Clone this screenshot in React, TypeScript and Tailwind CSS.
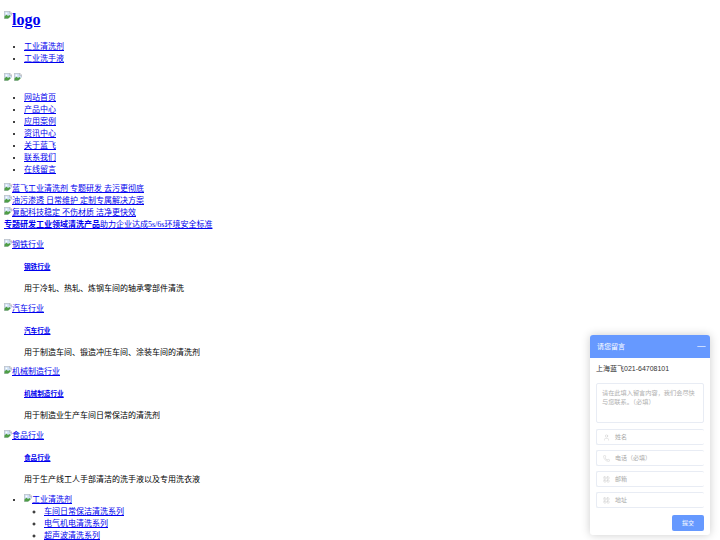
import { Minus, Phone, User, LayoutGrid } from "lucide-react";

const BrokenImage = () => (
  <svg width="8" height="8" viewBox="0 0 16 16" className="inline-block align-top">
    <path d="M0.5 0.5h11l4 4v11H0.5z" fill="#cfe0f5" stroke="#9a9a9a" />
    <path d="M11.5 0.5v4h4" fill="#eee" stroke="#9a9a9a" />
    <path d="M1 15V11l4-4 3 3 3-2 4 4v3z" fill="#4f9e46" />
    <circle cx="5" cy="5" r="1.8" fill="#fff" />
    <path d="M8 16l8-8v8z" fill="#fff" />
  </svg>
);

const Img = ({ alt }: { alt?: string }) => (
  <>
    <BrokenImage />
    {alt}
  </>
);

const industries = [
  { name: "钢铁行业", desc: "用于冷轧、热轧、炼钢车间的轴承零部件清洗" },
  { name: "汽车行业", desc: "用于制造车间、锻造冲压车间、涂装车间的清洗剂" },
  { name: "机械制造行业", desc: "用于制造业生产车间日常保洁的清洗剂" },
  { name: "食品行业", desc: "用于生产线工人手部清洁的洗手液以及专用洗衣液" },
];

const navItems = ["网站首页", "产品中心", "应用案例", "资讯中心", "关于蓝飞", "联系我们", "在线留言"];

const banners = ["蓝飞工业清洗剂 专题研发 去污更彻底", "油污渗透 日常维护 定制专属解决方案", "复配科技稳定 不伤材质 洁净更快效"];

const fields = [
  { label: "姓名", icon: <User size={7} strokeWidth={1} /> },
  { label: "电话（必填）", icon: <Phone size={7} strokeWidth={1} /> },
  { label: "邮箱", icon: <LayoutGrid size={7} strokeWidth={1} /> },
  { label: "地址", icon: <LayoutGrid size={7} strokeWidth={1} /> },
];

export default function App() {
  return (
    <div className="relative h-[540px] overflow-hidden bg-white px-1 text-[8px] leading-[12px] text-black font-['Liberation_Serif','Noto_Sans_CJK_SC',serif] [&_a]:text-[#0000ee] [&_a]:underline">
      <h1 className="pt-[11px] pb-[12px] text-base leading-[18px] font-bold">
        <a href="#">
          <Img alt="logo" />
        </a>
      </h1>

      <ul className="list-disc pl-5">
        <li><a href="#">工业清洗剂</a></li>
        <li><a href="#">工业洗手液</a></li>
      </ul>

      <div className="mt-2 flex h-[11px] items-start gap-[2px]">
        <BrokenImage />
        <BrokenImage />
      </div>

      <ul className="mt-2 list-disc pl-5">
        {navItems.map((item) => (
          <li key={item}><a href="#">{item}</a></li>
        ))}
      </ul>

      <div className="mt-[7px]">
        {banners.map((b) => (
          <div key={b}>
            <a href="#"><Img alt={b} /></a>
          </div>
        ))}
        <a href="#">
          <b>专题研发工业领域清洗产品</b>助力企业达成5s/6s环境安全标准
        </a>
      </div>

      <div className="mt-2">
        {industries.map((it) => (
          <div key={it.name} className="mb-[7.67px]">
            <a href="#"><Img alt={it.name} /></a>
            <div className="mt-[11px] pl-5">
              <h5 className="text-[6.64px] leading-[10px] font-bold">
                <a href="#">{it.name}</a>
              </h5>
              <p className="mt-[11px]">{it.desc}</p>
            </div>
          </div>
        ))}
      </div>

      <ul className="list-disc pl-5">
        <li>
          <a href="#"><Img alt="工业清洗剂" /></a>
          <ul className="list-[circle] pl-5">
            <li><a href="#">车间日常保洁清洗系列</a></li>
            <li><a href="#">电气机电清洗系列</a></li>
            <li><a href="#">超声波清洗系列</a></li>
          </ul>
        </li>
      </ul>

      {/* Message widget */}
      <div className="absolute top-[335px] left-[590px] flex h-[200px] w-[120px] flex-col overflow-hidden rounded-[3px] bg-white shadow-[0_0_10px_rgba(0,0,0,0.2)] font-['Liberation_Sans','Noto_Sans_CJK_SC',sans-serif]">
        <div className="flex h-[23px] items-center justify-between bg-[#6699ff] pr-[2px] pl-[7px] text-[7px] text-white">
          <span>请您留言</span>
          <Minus size={13} strokeWidth={1.2} />
        </div>
        <div className="flex flex-1 flex-col px-[6px]">
          <div className="mt-[5px] text-[7px] text-[#333]">上海蓝飞021-64708101</div>
          <div className="mt-[8px] h-[40px] rounded-[2px] border border-[#e8ecf4] py-[4px] pr-[4px] pl-[5px] text-[6.2px] leading-[9px] text-[#b0b0b0]">
            请在此填入留言内容，我们会尽快与您联系。（必填）
          </div>
          <div className="mt-[6px] flex flex-col gap-[5px]">
            {fields.map((f) => (
              <div key={f.label} className="flex h-[16px] items-center gap-[5px] rounded-[2px] border border-r-0 border-[#e8ecf4] pl-[6px] text-[6px] text-[#aaa]">
                {f.icon}
                <span>{f.label}</span>
              </div>
            ))}
          </div>
          <div className="mt-[7px] ml-auto flex h-[16px] w-[32px] items-center justify-center rounded-[2px] bg-[#6699ff] text-[6px] text-white">
            提交
          </div>
        </div>
      </div>
    </div>
  );
}
